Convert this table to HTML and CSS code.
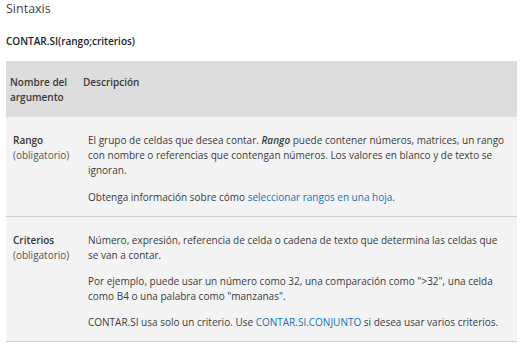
FILE: index.html
```html
<!DOCTYPE html>
<html lang="es">
<head>
<meta charset="utf-8">
<link rel="stylesheet" href="styles.css">
</head>
<body>
<div class="page">
  <h2 class="title">Sintaxis</h2>
  <p class="syntax"><b>CONTAR.SI(rango;criterios)</b></p>
  <table class="args">
    <colgroup>
      <col class="col-name">
      <col class="col-desc">
    </colgroup>
    <thead>
      <tr>
        <th>Nombre del argumento</th>
        <th>Descripción</th>
      </tr>
    </thead>
    <tbody>
      <tr class="row-range">
        <td class="c1"><b>Rango</b><br>(obligatorio)</td>
        <td class="c2">
          <p>El grupo de celdas que desea contar. <b><i>Rango</i></b> puede contener números, matrices, un rango con nombre o referencias que contengan números. Los valores en blanco y de texto se ignoran.</p>
          <p>Obtenga información sobre cómo <a href="#">seleccionar rangos en una hoja</a>.</p>
        </td>
      </tr>
      <tr class="row-criteria">
        <td class="c1"><b>Criterios</b><br>(obligatorio)</td>
        <td class="c2">
          <p>Número, expresión, referencia de celda o cadena de texto que determina las celdas que se van a contar.</p>
          <p>Por ejemplo, puede usar un número como 32, una comparación como "&gt;32", una celda como B4 o una palabra como "manzanas".</p>
          <p>CONTAR.SI usa solo un criterio. Use <a href="#">CONTAR.SI.CONJUNTO</a> si desea usar varios criterios.</p>
        </td>
      </tr>
    </tbody>
  </table>
</div>
</body>
</html>
```
FILE: styles.css
```css
html, body {
  margin: 0;
  padding: 0;
  background: #ffffff;
}
body {
  font-family: "Open Sans", "Noto Sans", sans-serif;
  color: #3b3b3b;
  font-size: 10px;
  line-height: 15px;
}
.page {
  padding: 0 5px 0 6px;
}
.title {
  margin: 0;
  font-size: 12.5px;
  font-weight: normal;
  color: #454545;
  line-height: 17px;
}
.syntax {
  margin: 17px 0 12px;
  line-height: 15px;
  color: #222;
}
.syntax b { font-weight: 600; }
.args {
  width: 511px;
  border-collapse: collapse;
  table-layout: fixed;
}
.col-name { width: 73px; }
.args th {
  background: #dcdcdc;
  text-align: left;
  vertical-align: top;
  font-weight: 600;
  color: #3a3a3a;
  padding: 14px 6px 12px 4px;
}
.args td {
  background: #f3f3f3;
  vertical-align: top;
  padding: 16px 9px 11px 7px;
  border-bottom: 1px solid #cfcfcf;
}
.args td.c2 { padding-left: 9px; }
.args td.c1 { color: #555; }
.args td.c1 b { color: #333; }
.args b { font-weight: 600; }
.args td.c2 p {
  margin: 0 0 12px;
}
.args .row-criteria td.c2 p { margin-bottom: 11px; }
.args td.c2 p:last-child { margin-bottom: 0; }
a {
  color: #1a6fb5;
  text-decoration: none;
}
```
